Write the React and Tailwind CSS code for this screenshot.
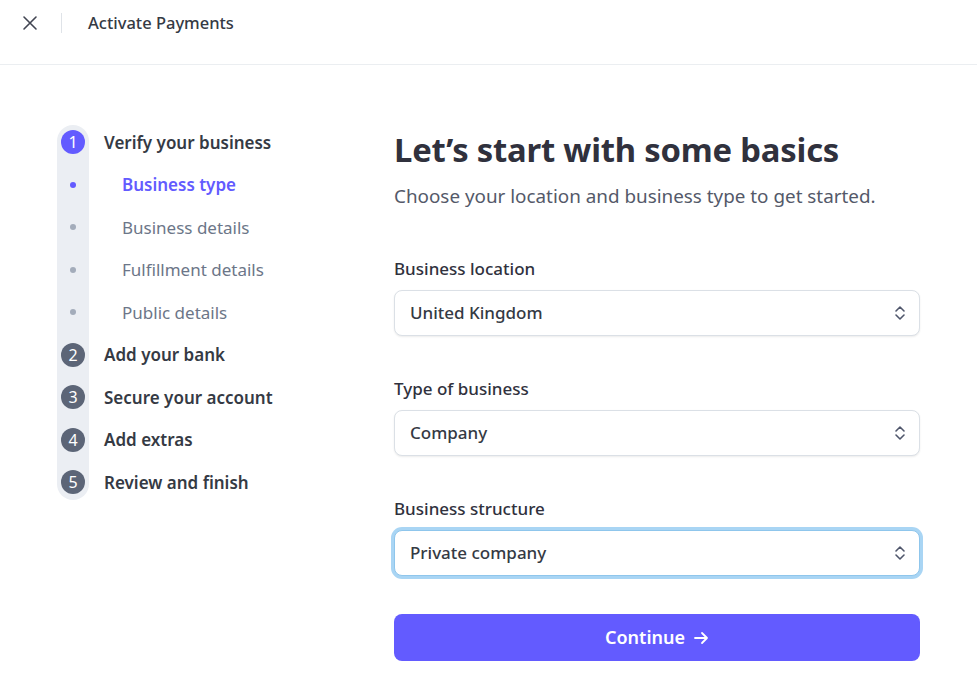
import React from "react";

const font = { fontFamily: '"Noto Sans", "Open Sans", sans-serif' };

function Chevrons() {
  return (
    <svg width="14" height="16" viewBox="0 0 14 16" fill="none" stroke="#4f566b" strokeWidth="1.6" strokeLinecap="round" strokeLinejoin="round">
      <path d="M3 6 L7 2 L11 6" />
      <path d="M3 10 L7 14 L11 10" />
    </svg>
  );
}

function Select({ label, value, focused }) {
  return (
    <div className="flex flex-col">
      <div className="text-[17px] leading-6 font-medium text-[#30313d] mb-[9px]">{label}</div>
      <div
        className={
          "h-[46px] rounded-lg bg-white flex items-center justify-between pl-[15px] pr-[12px] " +
          (focused
            ? "border border-[#8fc6ec] shadow-[0_0_0_3px_#a9d5f4]"
            : "border border-[#dbe0e6] shadow-[0_1px_2px_rgba(0,0,0,0.08)]")
        }
      >
        <span className="text-[17px] font-medium text-[#353a44]">{value}</span>
        <Chevrons />
      </div>
    </div>
  );
}

const steps = [
  { kind: "step", n: 1, label: "Verify your business", active: true },
  { kind: "sub", label: "Business type", active: true },
  { kind: "sub", label: "Business details" },
  { kind: "sub", label: "Fulfillment details" },
  { kind: "sub", label: "Public details" },
  { kind: "step", n: 2, label: "Add your bank" },
  { kind: "step", n: 3, label: "Secure your account" },
  { kind: "step", n: 4, label: "Add extras" },
  { kind: "step", n: 5, label: "Review and finish" },
];

export default function App() {
  return (
    <div className="w-[977px] h-[690px] bg-white overflow-hidden" style={font}>
      <header className="h-[65px] border-b border-[#ebeef1] flex items-start pt-[13px]">
        <div className="h-[20px] w-[57px] flex items-center justify-center pl-[2px]">
          <svg width="16" height="16" viewBox="0 0 16 16" stroke="#414552" strokeWidth="1.6" strokeLinecap="round">
            <path d="M2 2 L14 14 M14 2 L2 14" />
          </svg>
        </div>
        <div className="w-px h-[20px] bg-[#dfe3e8] ml-[4px]" />
        <div className="ml-[26px] h-[20px] flex items-center text-[16.5px] font-medium text-[#353a44]">Activate Payments</div>
      </header>

      <div className="flex">
        <nav className="w-[394px] pl-[57px] pt-[56px]">
          <div className="relative">
            <div className="absolute left-0 w-[32px] top-[4px] bottom-[4px] rounded-full bg-[#ebeef3]" />
            <div className="relative flex flex-col">
              {steps.map((s, i) => (
                <div key={i} className="h-[42.5px] flex items-center">
                  <div className="w-[32px] flex justify-center">
                    {s.kind === "step" ? (
                      <div
                        className={
                          "w-[24px] h-[24px] rounded-full flex items-center justify-center text-white text-[16px] " +
                          (s.active ? "bg-[#635bff]" : "bg-[#5c6577]")
                        }
                      >
                        {s.n}
                      </div>
                    ) : (
                      <div className={"w-[6px] h-[6px] rounded-full " + (s.active ? "bg-[#635bff]" : "bg-[#a3acba]")} />
                    )}
                  </div>
                  {s.kind === "step" ? (
                    <div className="ml-[15px] text-[17px] font-semibold text-[#353a44]">{s.label}</div>
                  ) : (
                    <div
                      className={
                        "ml-[33px] text-[17px] " +
                        (s.active ? "font-semibold text-[#635bff]" : "text-[#6c7688]")
                      }
                    >
                      {s.label}
                    </div>
                  )}
                </div>
              ))}
            </div>
          </div>
        </nav>

        <main className="w-[526px] pt-[64px]">
          <h1 className="text-[32.8px] leading-[42px] font-bold text-[#30313d] tracking-[-0.2px]">Let’s start with some basics</h1>
          <p className="mt-[12px] text-[18.85px] leading-[26px] text-[#545969]">Choose your location and business type to get started.</p>
          <div className="mt-[48px] flex flex-col gap-[41px]">
            <Select label="Business location" value="United Kingdom" />
            <Select label="Type of business" value="Company" />
            <Select label="Business structure" value="Private company" focused />
          </div>
          <button className="mt-[38px] w-full h-[47px] rounded-lg bg-[#635bff] text-white text-[18px] font-semibold flex items-center justify-center gap-[8px]">
            Continue
            <svg width="16" height="16" viewBox="0 0 16 16" fill="none" stroke="white" strokeWidth="1.8" strokeLinecap="round" strokeLinejoin="round">
              <path d="M2 8 H14 M9 3 L14 8 L9 13" />
            </svg>
          </button>
        </main>
      </div>
    </div>
  );
}
